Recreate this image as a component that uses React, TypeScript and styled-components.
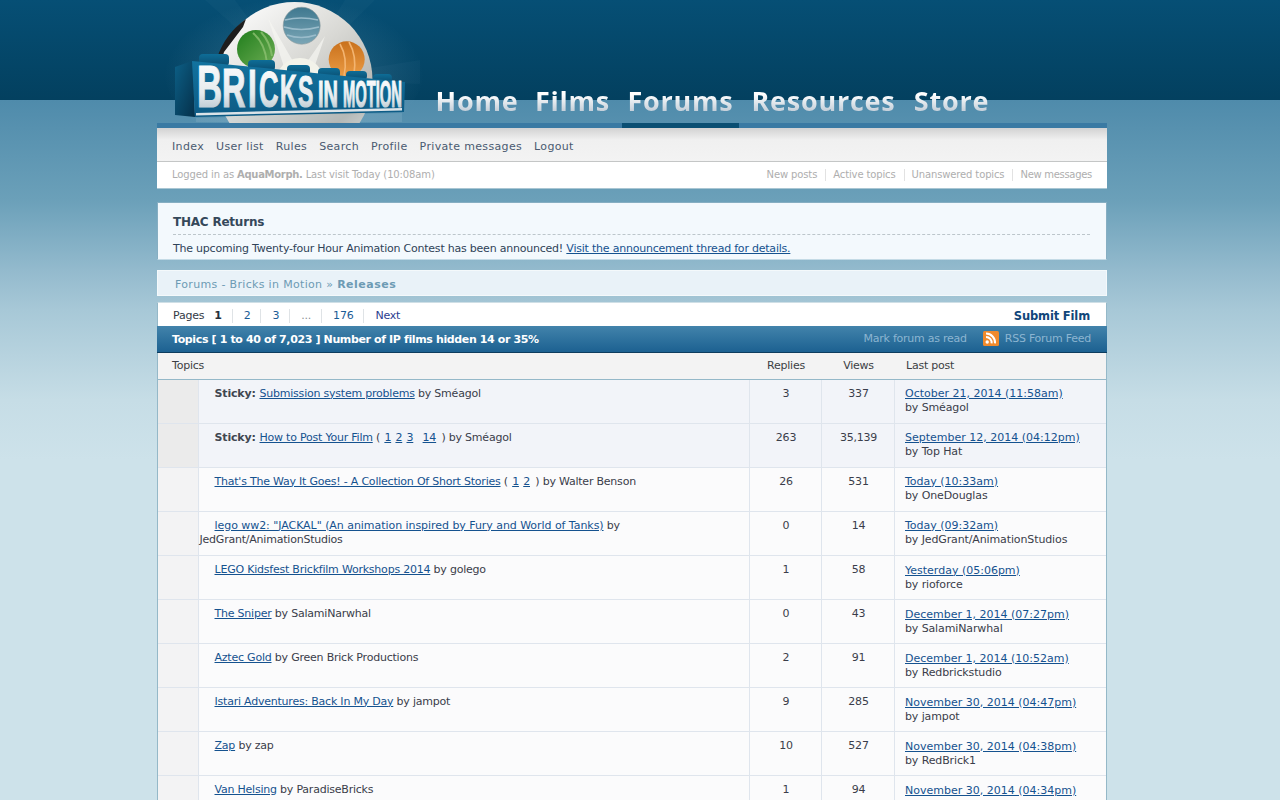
import styled, { createGlobalStyle } from "styled-components";

const GlobalStyle = createGlobalStyle`
  html, body { margin: 0; padding: 0; }
  body {
    min-height: 800px;
    background:
      linear-gradient(#064f75, #03405f) 0 0 / 100% 100px no-repeat,
      linear-gradient(#4f8bab 0, #6ba0b9 100px, #93bacd 170px, #a7c8d7 210px, #c6dde6 300px, #cde2ea 360px) 0 100px / 100% 700px no-repeat,
      #cde2ea;
    font-family: "DejaVu Sans", Verdana, sans-serif;
    font-size: 11px;
    letter-spacing: -0.22px;
    color: #3a3d4a;
  }
  #root { width: 1264px; }
`;

const NAV = [
  { label: "Home", width: 92 },
  { label: "Films", width: 99 },
  { label: "Forums", width: 117, active: true },
  { label: "Resources", width: 169 },
  { label: "Store", width: 87 },
];

const MENU = ["Index", "User list", "Rules", "Search", "Profile", "Private messages", "Logout"];
const QUICK = ["New posts", "Active topics", "Unanswered topics", "New messages"];

// each letter of the logo shrinks toward the right, like the brick it sits on
const LOGO_LETTERS = [
  { ch: "B", x: 197, y: 107, size: 60, sx: 0.58 },
  { ch: "R", x: 222, y: 107, size: 56, sx: 0.58 },
  { ch: "I", x: 248, y: 107, size: 54, sx: 0.58 },
  { ch: "C", x: 259, y: 107, size: 50, sx: 0.54 },
  { ch: "K", x: 280, y: 107, size: 46, sx: 0.5 },
  { ch: "S", x: 298, y: 107, size: 44, sx: 0.52 },
];

interface Topic {
  title: string;
  sticky?: boolean;
  pages?: string[];
  author: string;
  replies: string;
  views: string;
  last: string;
  lastBy: string;
  spacing?: number;
}

const TOPICS: Topic[] = [
  { title: "Submission system problems", sticky: true, author: "Sméagol", replies: "3", views: "337", last: "October 21, 2014 (11:58am)", lastBy: "Sméagol" },
  { title: "How to Post Your Film", sticky: true, pages: ["1", "2", "3", "14"], author: "Sméagol", replies: "263", views: "35,139", last: "September 12, 2014 (04:12pm)", lastBy: "Top Hat" },
  { title: "That's The Way It Goes! - A Collection Of Short Stories", pages: ["1", "2"], author: "Walter Benson", replies: "26", views: "531", last: "Today (10:33am)", lastBy: "OneDouglas" },
  { title: "lego ww2: \"JACKAL\" (An animation inspired by Fury and World of Tanks)", author: "JedGrant/AnimationStudios", replies: "0", views: "14", last: "Today (09:32am)", lastBy: "JedGrant/AnimationStudios", spacing: -0.05 },
  { title: "LEGO Kidsfest Brickfilm Workshops 2014", author: "golego", replies: "1", views: "58", last: "Yesterday (05:06pm)", lastBy: "rioforce" },
  { title: "The Sniper", author: "SalamiNarwhal", replies: "0", views: "43", last: "December 1, 2014 (07:27pm)", lastBy: "SalamiNarwhal" },
  { title: "Aztec Gold", author: "Green Brick Productions", replies: "2", views: "91", last: "December 1, 2014 (10:52am)", lastBy: "Redbrickstudio" },
  { title: "Istari Adventures: Back In My Day", author: "jampot", replies: "9", views: "285", last: "November 30, 2014 (04:47pm)", lastBy: "jampot" },
  { title: "Zap", author: "zap", replies: "10", views: "527", last: "November 30, 2014 (04:38pm)", lastBy: "RedBrick1" },
  { title: "Van Helsing", author: "ParadiseBricks", replies: "1", views: "94", last: "November 30, 2014 (04:34pm)", lastBy: "ParadiseBricks" },
];

function Logo() {
  return (
    <LogoSvg viewBox="157 0 274 123" width="274" height="123">
      <defs>
        <radialGradient id="glow" cx="50%" cy="55%" r="50%">
          <stop offset="0" stopColor="#8fc0d8" stopOpacity="0.3" />
          <stop offset="1" stopColor="#8fc0d8" stopOpacity="0" />
        </radialGradient>
        <linearGradient id="reel" x1="0.1" y1="0" x2="0.9" y2="1">
          <stop offset="0" stopColor="#ffffff" />
          <stop offset="0.45" stopColor="#d8d8d4" />
          <stop offset="0.8" stopColor="#b3b4b0" />
          <stop offset="1" stopColor="#e4e4df" />
        </linearGradient>
        <linearGradient id="brick" x1="0" y1="0" x2="0" y2="1">
          <stop offset="0" stopColor="#12739f" />
          <stop offset="1" stopColor="#0d5a84" />
        </linearGradient>
        <linearGradient id="brickSide" x1="0" y1="0" x2="1" y2="1">
          <stop offset="0" stopColor="#0c5f86" />
          <stop offset="1" stopColor="#05304a" />
        </linearGradient>
        <linearGradient id="stud" x1="0" y1="0" x2="0" y2="1">
          <stop offset="0" stopColor="#0e6d97" />
          <stop offset="1" stopColor="#0a4d70" />
        </linearGradient>
        <linearGradient id="letters" x1="0" y1="0" x2="0" y2="1">
          <stop offset="0" stopColor="#ffffff" />
          <stop offset="0.6" stopColor="#e6ebee" />
          <stop offset="1" stopColor="#a6b8c4" />
        </linearGradient>
        <linearGradient id="blueHole" x1="0" y1="0" x2="0" y2="1">
          <stop offset="0" stopColor="#3f788f" />
          <stop offset="1" stopColor="#7ba6b6" />
        </linearGradient>
        <linearGradient id="greenHole" x1="0" y1="0" x2="1" y2="1">
          <stop offset="0" stopColor="#1f7d1c" />
          <stop offset="1" stopColor="#6fae55" />
        </linearGradient>
        <linearGradient id="orangeHole" x1="0" y1="0" x2="0" y2="1">
          <stop offset="0" stopColor="#c9711c" />
          <stop offset="1" stopColor="#eb9c45" />
        </linearGradient>
      </defs>
      <ellipse cx="294" cy="70" rx="130" ry="80" fill="url(#glow)" />
      <path d="M294 80 L205 0 L235 0 Z M294 80 L345 0 L375 0 Z M294 80 L420 60 L420 84 Z" fill="#9cc8de" opacity="0.035" />
      <circle cx="294.5" cy="80" r="78" fill="url(#reel)" />
      <path d="M217 58 A78 78 0 0 1 246 19 L243 27 L224 52 L220 66 Z" fill="#1e1e1e" />
      <path d="M268 18 L298 70 L285 70 Z M325 36 L300 72 L312 74 Z M232 80 L282 74 L280 84 Z" fill="#f6f6f2" opacity="0.7" />
      <circle cx="301.7" cy="25.7" r="18.5" fill="url(#blueHole)" stroke="#8b9a9d" strokeWidth="0.6" />
      <path d="M285 20 q16 -4 33 0 M284 27 q17 5 35 0 M287 35 q14 5 29 0" stroke="#9abccb" strokeWidth="1.6" fill="none" />
      <circle cx="256" cy="49" r="19" fill="url(#greenHole)" />
      <path d="M253 33 q12 10 14 30 M261 32 q9 10 11 24" stroke="#8cc070" strokeWidth="2" fill="none" opacity="0.8" />
      <circle cx="346.7" cy="59.3" r="18" fill="url(#orangeHole)" />
      <path d="M340 44 q8 14 4 32 M349 42 q8 14 5 32" stroke="#f3b470" strokeWidth="1.6" fill="none" />
      <circle cx="300" cy="82" r="24" fill="#f3f3ea" />
      <circle cx="300" cy="82" r="15" fill="#d6d6cd" />
      <rect x="199" y="54" width="30" height="12" rx="4" fill="url(#stud)" />
      <rect x="248" y="60" width="27" height="11" rx="4" fill="url(#stud)" />
      <rect x="287" y="65" width="23" height="10" rx="4" fill="url(#stud)" />
      <rect x="318" y="68" width="22" height="10" rx="4" fill="url(#stud)" />
      <rect x="346" y="71" width="21" height="9" rx="4" fill="url(#stud)" />
      <rect x="373" y="74" width="19" height="9" rx="4" fill="url(#stud)" />
      <path d="M175 67 L192 61 L195 117 L175 115 Z" fill="url(#brickSide)" />
      <path d="M192 61 L405 82 L404 112 L195 117 Z" fill="url(#brick)" />
      {LOGO_LETTERS.map((l) => (
        <LogoLetter key={l.x} fontSize={l.size} transform={`translate(${l.x} ${l.y}) scale(${l.sx} 1)`}>
          {l.ch}
        </LogoLetter>
      ))}
      <LogoLetter fontSize="37" transform="translate(318 107) scale(0.54 1)">IN</LogoLetter>
      <LogoLetter fontSize="36" x="343" y="107" textLength="59" lengthAdjust="spacingAndGlyphs">MOTION</LogoLetter>
      <path d="M196 113 L402 108 L402 110.5 L196 115.5 Z" fill="#dbe3e8" />
      <path d="M196 118 L402 113 L402 122 L196 122 Z" fill="#bcd3df" opacity="0.16" />
    </LogoSvg>
  );
}

function RssIcon() {
  return (
    <svg width="16" height="15" viewBox="0 0 16 15">
      <rect width="16" height="15" rx="1.5" fill="#f08a2c" />
      <circle cx="4.2" cy="11" r="1.7" fill="#fff" />
      <path d="M3 6a5.6 5.6 0 0 1 5.6 6.4M3 2.6a9 9 0 0 1 9 9.8" stroke="#fff" strokeWidth="2" fill="none" />
    </svg>
  );
}

function TopicRow({ topic, low }: { topic: Topic; low: boolean }) {
  return (
    <Row $sticky={topic.sticky}>
      <IconCell $sticky={topic.sticky} />
      <SubjectCell>
        {topic.sticky && <StickyLabel>Sticky: </StickyLabel>}
        <TopicLink href="#" style={topic.spacing ? { letterSpacing: topic.spacing } : undefined}>
          {topic.title}
        </TopicLink>
        {topic.pages && (
          <>
            {" ( "}
            {topic.pages.map((p, i) => (
              <span key={p}>
                {i > 0 && " "}
                <PageJump href="#" $gap={i === 3} $end={i === topic.pages!.length - 1}>{p}</PageJump>
              </span>
            ))}
            {" )"}
          </>
        )}
        {" by "}
        {topic.author}
      </SubjectCell>
      <CountCell>{topic.replies}</CountCell>
      <CountCell>{topic.views}</CountCell>
      <LastCell $low={low}>
        <TopicLink href="#">{topic.last}</TopicLink>
        <br />
        by {topic.lastBy}
      </LastCell>
    </Row>
  );
}

export default function App() {
  return (
    <>
      <GlobalStyle />
      <Masthead>
        <Logo />
        <MainNav>
          {NAV.map((n) => (
            <NavItem key={n.label} $active={n.active} style={{ width: n.width }}>
              <NavLabel>{n.label}</NavLabel>
            </NavItem>
          ))}
        </MainNav>
      </Masthead>
      <Page>
        <MenuBar>
          {MENU.map((m) => (
            <MenuLink key={m} href="#">{m}</MenuLink>
          ))}
        </MenuBar>
        <StatusBar>
          <span>
            Logged in as <strong>AquaMorph.</strong> Last visit Today (10:08am)
          </span>
          <QuickLinks>
            {QUICK.map((q) => (
              <QuickLink key={q} href="#">{q}</QuickLink>
            ))}
          </QuickLinks>
        </StatusBar>
        <Announcement>
          <AnnouncementTitle>THAC Returns</AnnouncementTitle>
          <div>
            The upcoming Twenty-four Hour Animation Contest has been announced!{" "}
            <TopicLink href="#">Visit the announcement thread for details.</TopicLink>
          </div>
        </Announcement>
        <Crumbs>
          Forums - Bricks in Motion » <strong>Releases</strong>
        </Crumbs>
        <ForumBox>
          <PagesBar>
            <PagesLeft>
              <PagesLabel>Pages</PagesLabel>
              <PageItem $current>1</PageItem>
              <PageItem>2</PageItem>
              <PageItem>3</PageItem>
              <PageItem $muted>...</PageItem>
              <PageItem>176</PageItem>
              <PageItem $last>Next</PageItem>
            </PagesLeft>
            <SubmitLink href="#">Submit Film</SubmitLink>
          </PagesBar>
          <TitleBar>
            <strong>Topics [ 1 to 40 of 7,023 ] Number of IP films hidden 14 or 35%</strong>
            <TitleActions>
              <span>Mark forum as read</span>
              <RssIcon />
              <span>RSS Forum Feed</span>
            </TitleActions>
          </TitleBar>
          <TopicTable>
            <colgroup>
              <col style={{ width: 40 }} />
              <col />
              <col style={{ width: 72 }} />
              <col style={{ width: 73 }} />
              <col style={{ width: 212 }} />
            </colgroup>
            <thead>
              <tr>
                <HeadCell colSpan={2} $pad={14}>Topics</HeadCell>
                <HeadCell $center>Replies</HeadCell>
                <HeadCell $center>Views</HeadCell>
                <HeadCell $pad={12}>Last post</HeadCell>
              </tr>
            </thead>
            <tbody>
              {TOPICS.map((t, i) => (
                <TopicRow key={t.title} topic={t} low={i >= 4} />
              ))}
            </tbody>
          </TopicTable>
        </ForumBox>
      </Page>
    </>
  );
}

const Masthead = styled.header`
  width: 950px;
  height: 123px;
  margin: 0 auto;
  display: flex;
`;

const LogoSvg = styled.svg`
  flex: none;
  display: block;
`;

const LogoLetter = styled.text`
  fill: url(#letters);
  stroke: url(#letters);
  stroke-width: 1.2px;
  font-family: "Liberation Sans", sans-serif;
  font-weight: 700;
  letter-spacing: 0;
`;

const MainNav = styled.nav`
  display: flex;
  height: 128px;
  align-items: flex-end;
`;

const NavItem = styled.div<{ $active?: boolean }>`
  height: 50px;
  border-bottom: 5px solid ${(p) => (p.$active ? "#0a4f73" : "transparent")};
  position: relative;
  z-index: 1;
  display: flex;
  justify-content: center;
`;

const NavLabel = styled.span`
  font-family: "Open Sans", "Noto Sans", sans-serif;
  font-size: 27px;
  font-weight: 700;
  line-height: 44px;
  height: 44px;
  margin-top: 6px;
  letter-spacing: 0.75px;
  background: linear-gradient(#ffffff 35%, #c5d0da 72%);
  -webkit-background-clip: text;
  background-clip: text;
  color: transparent;
  -webkit-box-reflect: below -14px linear-gradient(transparent 72%, rgba(255, 255, 255, 0.22));
`;

const Page = styled.main`
  width: 950px;
  margin: 0 auto;
  border-top: 5px solid #3a7aa3;
`;

const MenuBar = styled.nav`
  padding: 3px 0 0 15px;
  height: 30px;
  display: flex;
  gap: 12px;
  align-items: center;
  background: linear-gradient(#d2d2d2, #f0f0f0 12px, #f3f3f3);
  border-bottom: 1px solid #c4c6c6;
`;

const MenuLink = styled.a`
  color: #4a5a70;
  text-decoration: none;
  letter-spacing: 0.34px;
`;

const StatusBar = styled.div`
  height: 26px;
  padding: 0 15px;
  display: flex;
  justify-content: space-between;
  align-items: center;
  background: #fff;
  border-bottom: 1px solid #a9c6d3;
  font-size: 10px;
  line-height: 12px;
  letter-spacing: -0.13px;
  color: #aeaeae;

  strong {
    letter-spacing: -0.3px;
  }
`;

const QuickLinks = styled.div`
  display: flex;
`;

const QuickLink = styled.a`
  color: #aeaeae;
  text-decoration: none;
  padding: 0 8px 0 7px;
  border-left: 1px solid #e2e2e2;

  &:first-child {
    border-left: 0;
  }
  &:last-child {
    padding-right: 0;
    letter-spacing: -0.3px;
  }
`;

const Announcement = styled.section`
  margin-top: 13px;
  height: 56px;
  padding: 0 16px 0 15px;
  background: #f3f9fd;
  border: 1px solid #86aec2;
  border-bottom-color: #c4dbe6;
  color: #2f4358;
  line-height: 27px;
`;

const AnnouncementTitle = styled.h2`
  margin: 7px 0 0;
  height: 24px;
  font-size: 12px;
  font-weight: bold;
  line-height: 24px;
  color: #35485a;
  border-bottom: 1px dashed #bcc6cb;
`;

const Crumbs = styled.div`
  margin-top: 10px;
  height: 24px;
  padding-left: 17px;
  line-height: 28px;
  background: #e9f2f8;
  border: 1px solid #f4f9fb;
  color: #6d9bb4;
  letter-spacing: 0.33px;

  strong {
    color: #6d9bb4;
    letter-spacing: 0.5px;
  }
`;

const ForumBox = styled.section`
  margin-top: 6px;
  border: 1px solid #94b8c8;
  border-top-color: #cfdfe6;
  border-bottom: 0;
  background: #fff;
`;

const PagesBar = styled.div`
  height: 21px;
  padding: 2px 16px 0 15px;
  display: flex;
  justify-content: space-between;
  align-items: center;
  line-height: 14px;
`;

const PagesLeft = styled.div`
  display: flex;
  align-items: center;
`;

const PagesLabel = styled.span`
  color: #333a45;
  margin-right: 10px;
`;

const PageItem = styled.span<{ $current?: boolean; $muted?: boolean; $last?: boolean }>`
  padding: 0 10px 0 0;
  margin-right: 11px;
  border-right: ${(p) => (p.$last ? "0" : "1px solid #dfe3e6")};
  color: ${(p) => (p.$current ? "#26303c" : p.$muted ? "#8a8f95" : p.$last ? "#2c3d8f" : "#1b5c96")};
  font-weight: ${(p) => (p.$current ? "bold" : "normal")};
`;

const SubmitLink = styled.a`
  color: #10467a;
  font-weight: bold;
  font-size: 11.5px;
  letter-spacing: -0.15px;
  text-decoration: none;
`;

const TitleBar = styled.div`
  height: 26px;
  margin: 0 -1px;
  padding: 0 16px 0 15px;
  display: flex;
  justify-content: space-between;
  align-items: center;
  background: linear-gradient(#4283ab, #1c6191);
  border-bottom: 1px solid #0d3c5e;
  color: #fff;

  strong {
    letter-spacing: -0.37px;
  }
`;

const TitleActions = styled.div`
  display: flex;
  align-items: center;
  gap: 6px;
  margin-top: -2px;
  color: #8cb5d1;
  letter-spacing: -0.25px;

  span:first-child {
    margin-right: 10px;
  }
`;

const TopicTable = styled.table`
  width: 100%;
  table-layout: fixed;
  border-collapse: collapse;
`;

const HeadCell = styled.th<{ $center?: boolean; $pad?: number }>`
  box-sizing: border-box;
  height: 26px;
  padding: 1px 0 1px ${(p) => p.$pad ?? 2}px;
  text-align: ${(p) => (p.$center ? "center" : "left")};
  font-weight: normal;
  background: #f3f3f3;
  color: #3c3f44;
  border-bottom: 1px solid #94b8c8;
`;

const Row = styled.tr<{ $sticky?: boolean }>`
  height: 44px;
  background: ${(p) => (p.$sticky ? "#f2f4f9" : "#fbfbfc")};
  border-bottom: 1px solid #dfe5ed;
`;

const IconCell = styled.td<{ $sticky?: boolean }>`
  background: ${(p) => (p.$sticky ? "#ebebeb" : "#f3f3f4")};
  border-right: 1px solid #dfe5ed;
`;

const SubjectCell = styled.td`
  padding: 7px 0 0 1px;
  text-indent: 15px;
  vertical-align: top;
  line-height: 14px;
  border-right: 1px solid #dfe5ed;
`;

const CountCell = styled.td`
  padding: 7px 0 0 2px;
  text-align: center;
  vertical-align: top;
  line-height: 14px;
  border-right: 1px solid #dfe5ed;
`;

const LastCell = styled.td<{ $low?: boolean }>`
  padding: ${(p) => (p.$low ? "8px" : "7px")} 0 0 10.5px;
  vertical-align: top;
  line-height: 14px;
  letter-spacing: -0.12px;

  a {
    letter-spacing: 0;
  }
`;

const StickyLabel = styled.strong`
  color: #3f4650;
  letter-spacing: -0.15px;
`;

const TopicLink = styled.a`
  color: #15528f;
`;

const PageJump = styled.a<{ $gap?: boolean; $end?: boolean }>`
  color: #15528f;
  margin-left: ${(p) => (p.$gap ? "6px" : "1px")};
  margin-right: ${(p) => (p.$end ? "2px" : "0")};
`;
